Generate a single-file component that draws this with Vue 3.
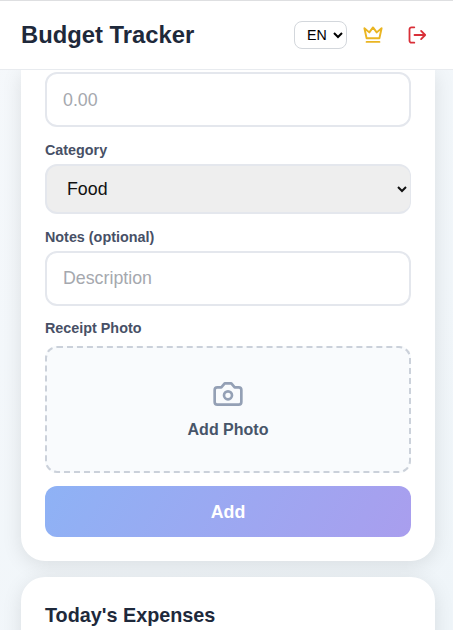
<script setup>
import { ref } from 'vue'

const language = ref('en')
const amount = ref('')
const category = ref('food')
const notes = ref('')
</script>

<template>
  <div class="page">
    <header class="topbar">
      <h1>Budget Tracker</h1>
      <select v-model="language" class="language" aria-label="Language">
        <option value="en">EN</option>
      </select>
      <button class="icon-button crown" type="button" aria-label="Premium">
        <svg width="20" height="18" viewBox="0 0 20 18" fill="none" stroke="currentColor" stroke-width="1.9" stroke-linecap="round" stroke-linejoin="round">
          <path d="M1.4 2.2 6.3 6.4 10 1.4l3.7 5 4.9-4.2-2.2 10.1H3.6z" />
          <path d="M3.6 15.9h12.8" />
        </svg>
      </button>
      <button class="icon-button logout" type="button" aria-label="Log out">
        <svg width="20" height="20" viewBox="0 0 20 20" fill="none" stroke="currentColor" stroke-width="1.8" stroke-linecap="round" stroke-linejoin="round">
          <path d="M7.3 2.3H4.5a2 2 0 0 0-2 2v11.4a2 2 0 0 0 2 2h2.8M7.5 10h10.7M14.1 5.9l4.1 4.1-4.1 4.1" />
        </svg>
      </button>
    </header>

    <main>
      <form class="card expense-form" @submit.prevent>
        <input v-model="amount" class="field amount" placeholder="0.00" aria-label="Amount" />
        <label for="category">Category</label>
        <select id="category" v-model="category" class="field category">
          <option value="food">Food</option>
        </select>
        <label for="notes">Notes (optional)</label>
        <input id="notes" v-model="notes" class="field" placeholder="Description" />
        <label class="photo-label">Receipt Photo</label>
        <button class="photo" type="button">
          <svg width="32" height="32" viewBox="0 0 24 24" fill="none" stroke="currentColor" stroke-width="2" stroke-linecap="round" stroke-linejoin="round">
            <path d="M14.5 4h-5L7 7H4a2 2 0 0 0-2 2v9a2 2 0 0 0 2 2h16a2 2 0 0 0 2-2V9a2 2 0 0 0-2-2h-3z" />
            <circle cx="12" cy="13" r="3" />
          </svg>
          <span>Add Photo</span>
        </button>
        <button class="submit" type="submit">Add</button>
      </form>

      <section class="card expenses">
        <h2>Today's Expenses</h2>
      </section>
    </main>
  </div>
</template>

<style>
body {
  margin: 0;
}
</style>

<style scoped>
* {
  box-sizing: border-box;
}
.page {
  height: 630px;
  overflow: hidden;
  font-family: "Liberation Sans", Arial, sans-serif;
  color: #1e293b;
  background: linear-gradient(135deg, #f5f8fb, #eff5f9);
}
.topbar {
  position: relative;
  z-index: 1;
  display: flex;
  align-items: center;
  height: 70px;
  padding: 0 26px 0 21px;
  background: #fff;
  border-top: 1px solid #dedfe1;
  border-bottom: 1px solid #e8ebef;
}
h1 {
  margin: 0 auto 0 0;
  font-size: 23.8px;
  line-height: 28px;
}
.language {
  width: 53px;
  height: 28px;
  padding: 0 0 0 8px;
  border: 1px solid #d3d7dc;
  border-radius: 8px;
  background: #fff;
  color: #000;
  font: 14.2px "Liberation Sans", Arial, sans-serif;
}
.icon-button {
  display: flex;
  padding: 0;
  border: 0;
  background: none;
}
.crown {
  margin-left: 16px;
  color: #eab522;
}
.logout {
  margin-left: 24px;
  color: #d92f38;
}
main {
  display: flex;
  flex-direction: column;
  gap: 16px;
  padding: 0 18px 0 21px;
}
.card {
  background: #fff;
  border-radius: 24px;
  box-shadow: 0 4px 20px rgba(0, 0, 0, 0.1);
}
.expense-form {
  display: flex;
  flex-direction: column;
  height: 491px;
  padding: 2px 24px 24px;
  border-radius: 0 0 24px 24px;
}
.field {
  width: 100%;
  height: 55px;
  flex: none;
  padding: 0 16px;
  border: 2px solid #e4e7ed;
  border-radius: 12px;
  outline: none;
  background: #fff;
  color: #111;
  font: 17.8px "Liberation Sans", Arial, sans-serif;
}
.field::placeholder {
  color: #a5a8ae;
}
.amount {
  padding-top: 2px;
}
.category {
  height: 50px;
  border-right-width: 1px;
  background: #eee;
}
label {
  margin: 15px 0 5px;
  color: #475066;
  font-size: 14.35px;
  font-weight: 700;
  line-height: 17px;
}
.photo-label {
  margin: 14px 0 9px;
}
.photo {
  display: flex;
  flex-direction: column;
  align-items: center;
  justify-content: center;
  gap: 10px;
  height: 127px;
  padding: 0 0 2px;
  border: 2px dashed #cbd1da;
  border-radius: 12px;
  background: #f9fbfd;
  color: #94a0b5;
  font: 700 16px/20px "Liberation Sans", Arial, sans-serif;
}
.photo span {
  color: #475569;
}
.submit {
  height: 51px;
  margin-top: 13px;
  padding: 1px 0 0;
  border: 0;
  border-radius: 12px;
  background: linear-gradient(120deg, #8eb2f5, #a99eee);
  color: #fff;
  font: 700 17.8px "Liberation Sans", Arial, sans-serif;
}
.expenses {
  position: relative;
  height: 100px;
  padding: 26px 24px;
}
h2 {
  margin: 0;
  font-size: 19.8px;
  line-height: 24px;
}
</style>
